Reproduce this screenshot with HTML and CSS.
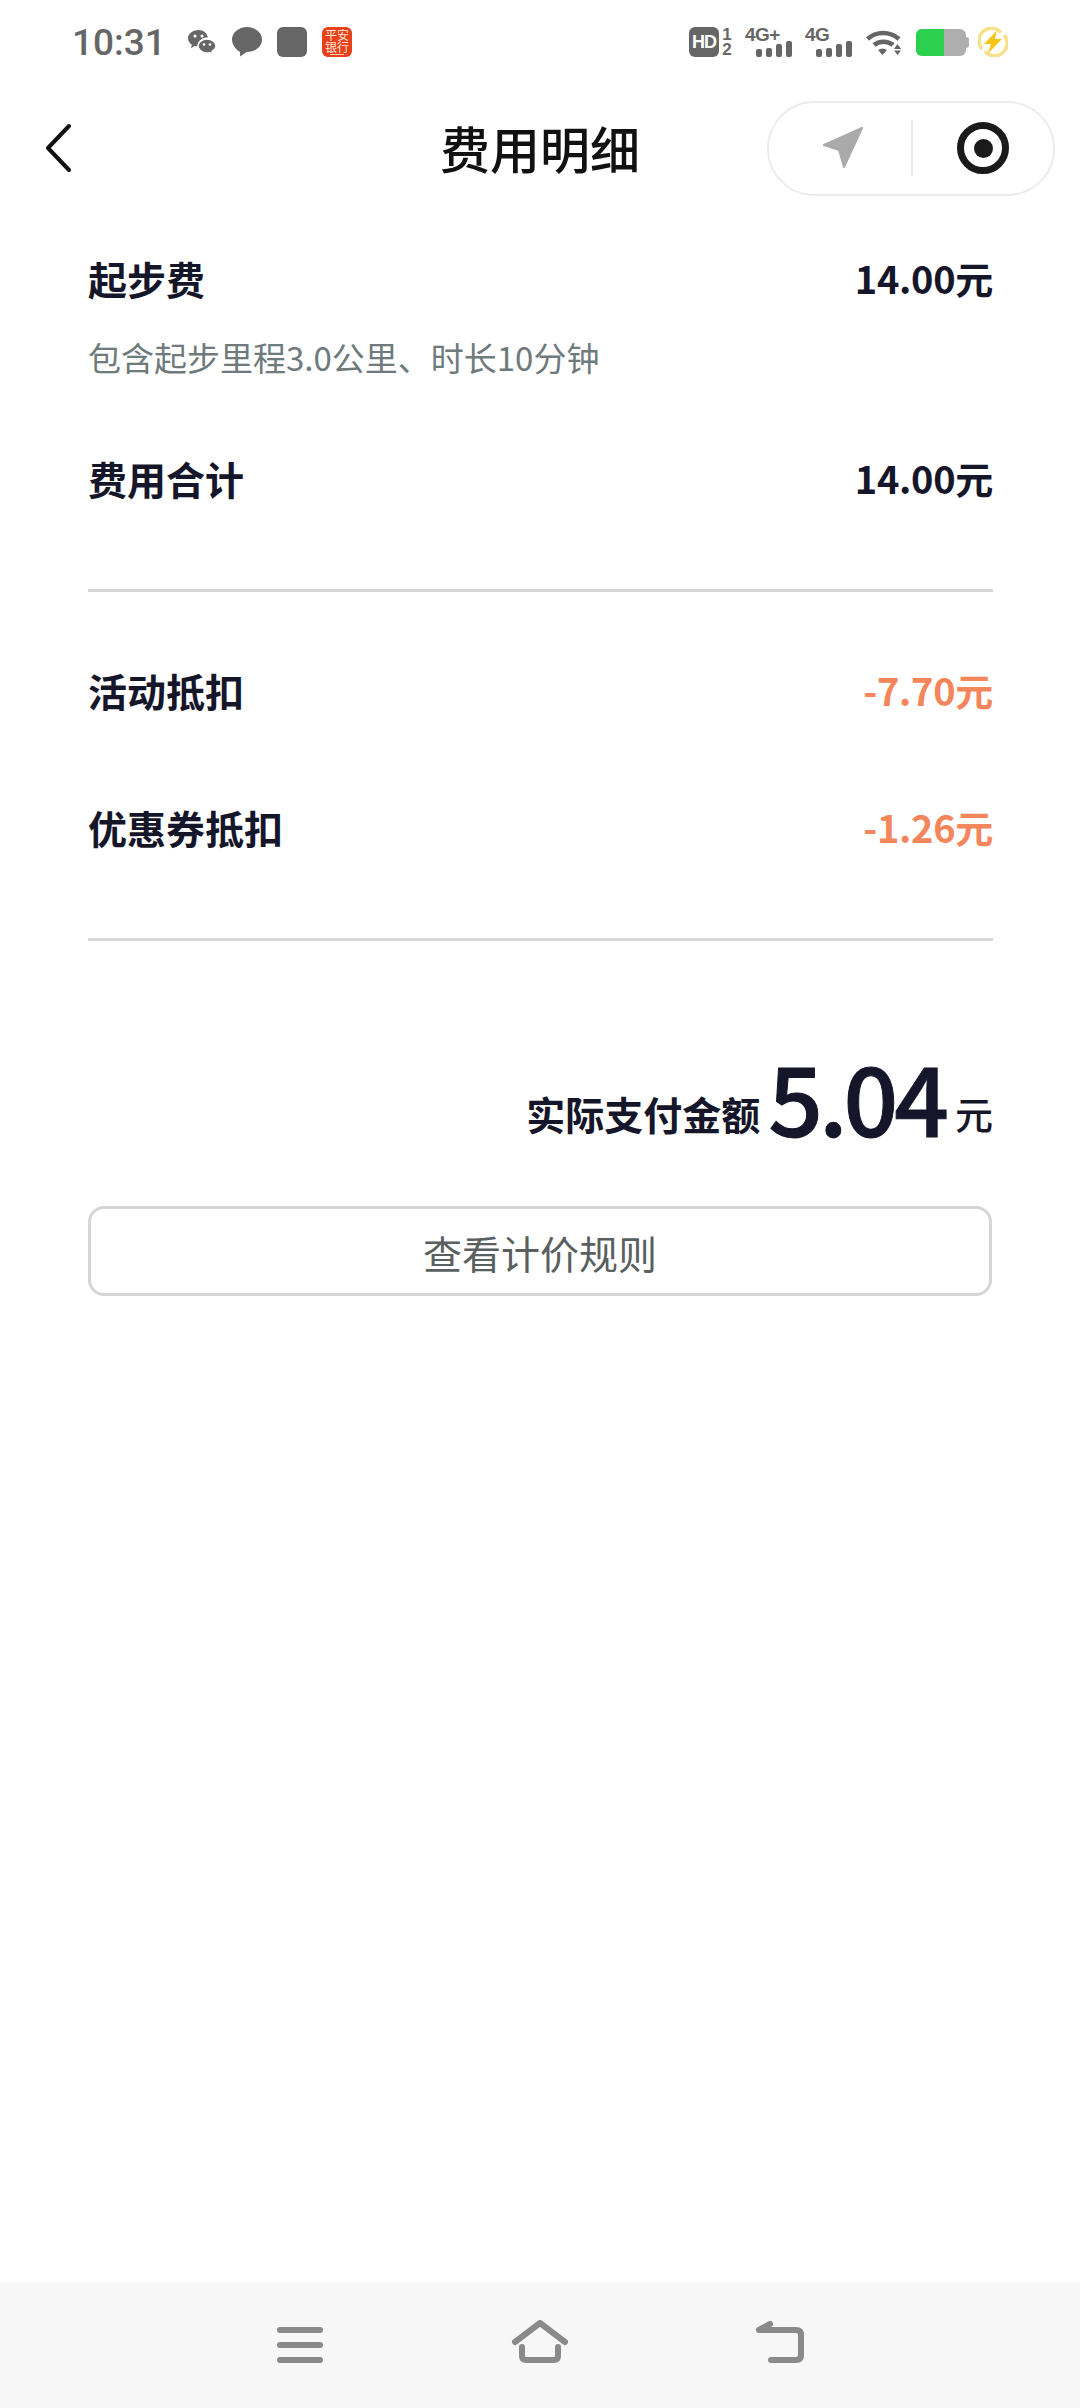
FILE: index.html
```html
<!DOCTYPE html>
<html>
    <head>
        <title>费用明细</title>
        <link rel="stylesheet" href="styles.css">
    </head>
    <body>
        <div class="status-bar">
            <div class="status-left">
                <span class="time">10:31</span>
                <svg class="ic-wechat" width="28" height="24" viewBox="0 0 28 24">
                    <path fill="#666" d="M10.5 0C4.7 0 0 3.7 0 8.3c0 2.6 1.5 4.9 3.9 6.4L3 18l3.7-1.9c1 .3 2 .4 3 .4-.4-4.6 3.6-8.6 8.6-8.9.5 0 1 0 1.4.1C19.5 3.3 15.5 0 10.5 0z"/>
                    <path fill="#666" d="M19 9c-5 0-9 3.1-9 7 0 3.9 4 7 9 7 1 0 1.9-.1 2.7-.4l3.1 1.4-.7-2.8C26.8 19.9 28 18 28 16c0-3.9-4-7-9-7z" stroke="#fff" stroke-width="1.5"/>
                    <circle cx="7" cy="6" r="1.5" fill="#fff"/><circle cx="14" cy="6" r="1.5" fill="#fff"/>
                    <circle cx="16" cy="14.5" r="1.3" fill="#fff"/><circle cx="22" cy="14.5" r="1.3" fill="#fff"/>
                </svg>
                <svg class="ic-bubble" width="30" height="30" viewBox="0 0 30 30">
                    <path fill="#666" d="M15 0C6.7 0 0 5.6 0 12.5c0 6.2 5.3 11.3 8 12.3l.2 4.7 6.5-4.5h.3c8.3 0 15-5.6 15-12.5S23.3 0 15 0z"/>
                </svg>
                <span class="ic-square"></span>
                <span class="ic-bank">平安银行</span>
            </div>
            <div class="status-right">
                <span class="ic-hd">HD</span>
                <span class="sim-nums">1 2</span>
                <div class="signal signal-first">
                    <span class="net">4G+</span>
                    <div class="bars"><i class="b1"></i><i class="b2"></i><i class="b3"></i><i class="b4"></i></div>
                </div>
                <div class="signal">
                    <span class="net">4G</span>
                    <div class="bars"><i class="b1"></i><i class="b2"></i><i class="b3"></i><i class="b4"></i></div>
                </div>
                <svg class="ic-wifi" width="38" height="28" viewBox="0 0 38 28">
                    <path fill="none" stroke="#666" stroke-width="4.5" d="M2.5 11C11 3 25 3 34 11"/>
                    <path fill="none" stroke="#666" stroke-width="4.5" d="M9 17C14 12.5 23 12.5 28 17"/>
                    <path fill="#666" d="M13 22c3-2 6-2 9 0l-4.5 5z"/>
                    <path fill="#666" d="M32.5 16l3.5 5h-7zM29 22.5h7L32.5 27z"/>
                </svg>
                <div class="battery"><div class="battery-level"></div></div>
                <svg class="ic-charge" width="30" height="30" viewBox="0 0 30 30">
                    <path fill="none" stroke="#f7e08a" stroke-width="3.5" d="M23 5.5A12.5 12.5 0 0 0 4 22M7 24.5A12.5 12.5 0 0 0 26 8"/>
                    <path fill="#f7c418" d="M19 3.5L6 17h7l-3 9.5L24 12h-7z"/>
                </svg>
            </div>
        </div>

        <div class="nav-bar">
            <svg class="back" width="30" height="50" viewBox="0 0 30 50">
                <path fill="none" stroke="#111" stroke-width="4" stroke-linecap="round" stroke-linejoin="round" d="M24 3L3 25l21 22"/>
            </svg>
            <h1>费用明细</h1>
            <div class="capsule">
                <div class="capsule-btn">
                    <svg class="ic-arrow" width="44" height="44" viewBox="0 0 44 44">
                        <path fill="#aaa" stroke="#aaa" stroke-width="2" stroke-linejoin="round" d="M40 2L2 19l15 5 5 17z"/>
                    </svg>
                </div>
                <div class="capsule-btn capsule-target">
                    <span class="target"></span>
                </div>
            </div>
        </div>

        <div class="content">
            <div class="row">
                <span>起步费</span>
                <span class="amount">14.00元</span>
            </div>
            <p class="note">包含起步里程3.0公里、时长10分钟</p>
            <div class="row row-total">
                <span>费用合计</span>
                <span class="amount">14.00元</span>
            </div>
            <div class="divider"></div>
            <div class="row row-first">
                <span>活动抵扣</span>
                <span class="amount discount">-7.70元</span>
            </div>
            <div class="row row-second">
                <span>优惠券抵扣</span>
                <span class="amount discount">-1.26元</span>
            </div>
            <div class="divider"></div>
            <div class="paid">
                <span class="paid-label">实际支付金额</span>
                <span class="paid-value">5.04</span>
                <span class="paid-unit">元</span>
            </div>
            <button class="rules-btn">查看计价规则</button>
        </div>

        <div class="bottom-nav">
            <svg width="46" height="36" viewBox="0 0 46 36">
                <path fill="none" stroke="#8a8a8a" stroke-width="6" stroke-linecap="round" d="M3 3h40M3 18h40M3 33h40"/>
            </svg>
            <svg width="58" height="43" viewBox="0 0 58 43">
                <path fill="none" stroke="#8a8a8a" stroke-width="6" stroke-linecap="round" stroke-linejoin="round" d="M4 22L29 3l25 19"/>
                <path fill="none" stroke="#8a8a8a" stroke-width="6" stroke-linecap="round" stroke-linejoin="round" d="M11 27v9q0 4 4 4h28q4 0 4-4v-9"/>
            </svg>
            <svg width="50" height="42" viewBox="0 0 50 42">
                <path fill="none" stroke="#8a8a8a" stroke-width="6" stroke-linecap="round" stroke-linejoin="round" d="M15 3L4 9h37q5 0 5 5v20q0 5-5 5H16"/>
            </svg>
        </div>
    </body>
</html>
```

FILE: styles.css
```css
* {
    margin: 0;
    padding: 0;
    box-sizing: border-box;
}

body {
    height: 100vh;
    display: flex;
    flex-direction: column;
    background: #fff;
    color: #15162a;
    font-family: "Noto Sans CJK SC", "Noto Sans", sans-serif;
}

/* status bar */
.status-bar {
    height: 84px;
    flex-shrink: 0;
    display: flex;
    justify-content: space-between;
    align-items: center;
    padding: 0 72px 0 72px;
}
.status-left, .status-right {
    display: flex;
    align-items: center;
}
.time {
    font-family: Roboto, sans-serif;
    font-size: 37px;
    font-weight: 500;
    color: #666;
    width: 116px;
}
.ic-bubble {
    margin-left: 16px;
}
.ic-square {
    width: 30px;
    height: 30px;
    margin-left: 15px;
    background: #666;
    border-radius: 6px;
}
.ic-bank {
    position: relative;
    width: 30px;
    height: 30px;
    margin-left: 15px;
    padding: 2px 3px 0;
    background: #e8401a;
    border-radius: 6px;
    color: #ffe6d8;
    font-size: 12px;
    line-height: 12px;
    text-align: center;
}
.ic-bank::after {
    content: "";
    position: absolute;
    left: 8px;
    right: 8px;
    bottom: 2px;
    height: 1px;
    background: #ffd0bc;
}
.ic-hd {
    width: 30px;
    height: 30px;
    background: #666;
    border-radius: 6px;
    color: #fff;
    font-family: "Liberation Sans", sans-serif;
    font-weight: bold;
    font-size: 18px;
    letter-spacing: -1px;
    line-height: 30px;
    text-align: center;
}
.sim-nums {
    width: 12px;
    margin-left: 2px;
    font-family: "Liberation Sans", sans-serif;
    font-weight: bold;
    font-size: 17px;
    line-height: 15px;
    color: #666;
    text-align: center;
}
.signal {
    position: relative;
    width: 47px;
    height: 30px;
    margin-left: 13px;
}
.signal-first {
    margin-left: 12px;
}
.net {
    position: absolute;
    left: 0;
    top: -1px;
    font-family: "Liberation Sans", sans-serif;
    font-weight: bold;
    font-size: 19px;
    letter-spacing: -.5px;
    line-height: 18px;
    color: #666;
}
.bars {
    position: absolute;
    right: 0;
    bottom: 0;
    display: flex;
    align-items: flex-end;
    gap: 4px;
}
.bars i {
    width: 6px;
    background: #666;
    border-radius: 2px;
}
.b1 { height: 8px; }
.b2 { height: 9px; }
.b3 { height: 13px; }
.b4 { height: 16px; }
.ic-wifi {
    margin-left: 13px;
}
.battery {
    position: relative;
    width: 50px;
    height: 27px;
    margin-left: 13px;
    margin-right: 3px;
    background: #aeaeae;
    border-radius: 6px;
}
.battery::after {
    content: "";
    position: absolute;
    right: -3px;
    top: 8px;
    width: 3px;
    height: 11px;
    background: #aeaeae;
    border-radius: 0 3px 3px 0;
}
.battery-level {
    width: 28px;
    height: 100%;
    background: #2bd04f;
    border-radius: 6px 0 0 6px;
}
.ic-charge {
    margin-left: 9px;
}

/* title bar */
.nav-bar {
    height: 128px;
    flex-shrink: 0;
    display: grid;
    grid-template-columns: 1fr auto 1fr;
    align-items: center;
    padding: 0 25px;
}
.back {
    margin-left: 20px;
}
.nav-bar h1 {
    font-size: 50px;
    font-weight: 500;
    line-height: 60px;
    color: #111;
    margin-bottom: 3px;
}
.capsule {
    justify-self: end;
    width: 288px;
    height: 95px;
    display: flex;
    align-items: center;
    border: 2px solid #ececec;
    border-radius: 48px;
}
.capsule-btn {
    width: 142px;
    height: 56px;
    display: flex;
    justify-content: center;
    align-items: center;
}
.ic-arrow {
    margin-left: 8px;
}
.capsule-target {
    border-left: 2px solid #ececec;
}
.target {
    width: 52px;
    height: 52px;
    border: 7px solid #1a1a1a;
    border-radius: 50%;
    display: flex;
    justify-content: center;
    align-items: center;
}
.target::after {
    content: "";
    width: 19px;
    height: 19px;
    background: #1a1a1a;
    border-radius: 50%;
}

/* fee list */
.content {
    flex: 1;
    padding: 36px 87px 0 88px;
}
.row {
    height: 60px;
    display: flex;
    justify-content: space-between;
    align-items: center;
    font-size: 39px;
    font-weight: 700;
    line-height: 60px;
}
.amount {
    font-size: 38px;
    letter-spacing: -.3px;
}
.discount {
    color: #f5855a;
}
.note {
    margin-top: 24px;
    font-size: 33px;
    line-height: 50px;
    color: #6f7a7c;
}
.row-total {
    margin-top: 66px;
}
.row-first {
    margin-top: 68px;
}
.row-second {
    margin-top: 77px;
}
.divider {
    height: 3px;
    margin-top: 81px;
    background: #d8d8d8;
}
.paid {
    margin-top: 100px;
    display: flex;
    justify-content: flex-end;
    align-items: flex-end;
}
.paid-label {
    padding-bottom: 8px;
    font-size: 39px;
    font-weight: 700;
    line-height: 60px;
}
.paid-value {
    margin-left: 8px;
    font-size: 96px;
    font-weight: 500;
    letter-spacing: -4px;
    line-height: 110px;
    -webkit-text-stroke: 1px #15162a;
}
.paid-unit {
    margin-left: 10px;
    padding-bottom: 8px;
    font-size: 38px;
    font-weight: 500;
    line-height: 60px;
}
.rules-btn {
    display: block;
    width: 904px;
    height: 90px;
    margin-top: 55px;
    padding-top: 2px;
    background: #fff;
    border: 3px solid #d5d5d5;
    border-radius: 16px;
    font-family: inherit;
    font-size: 39px;
    color: #5a5f60;
}

/* system navigation */
.bottom-nav {
    height: 126px;
    flex-shrink: 0;
    display: grid;
    grid-template-columns: repeat(3, 240px);
    justify-content: center;
    justify-items: center;
    align-items: end;
    padding-bottom: 45px;
    background: #f7f7f7;
}
```
